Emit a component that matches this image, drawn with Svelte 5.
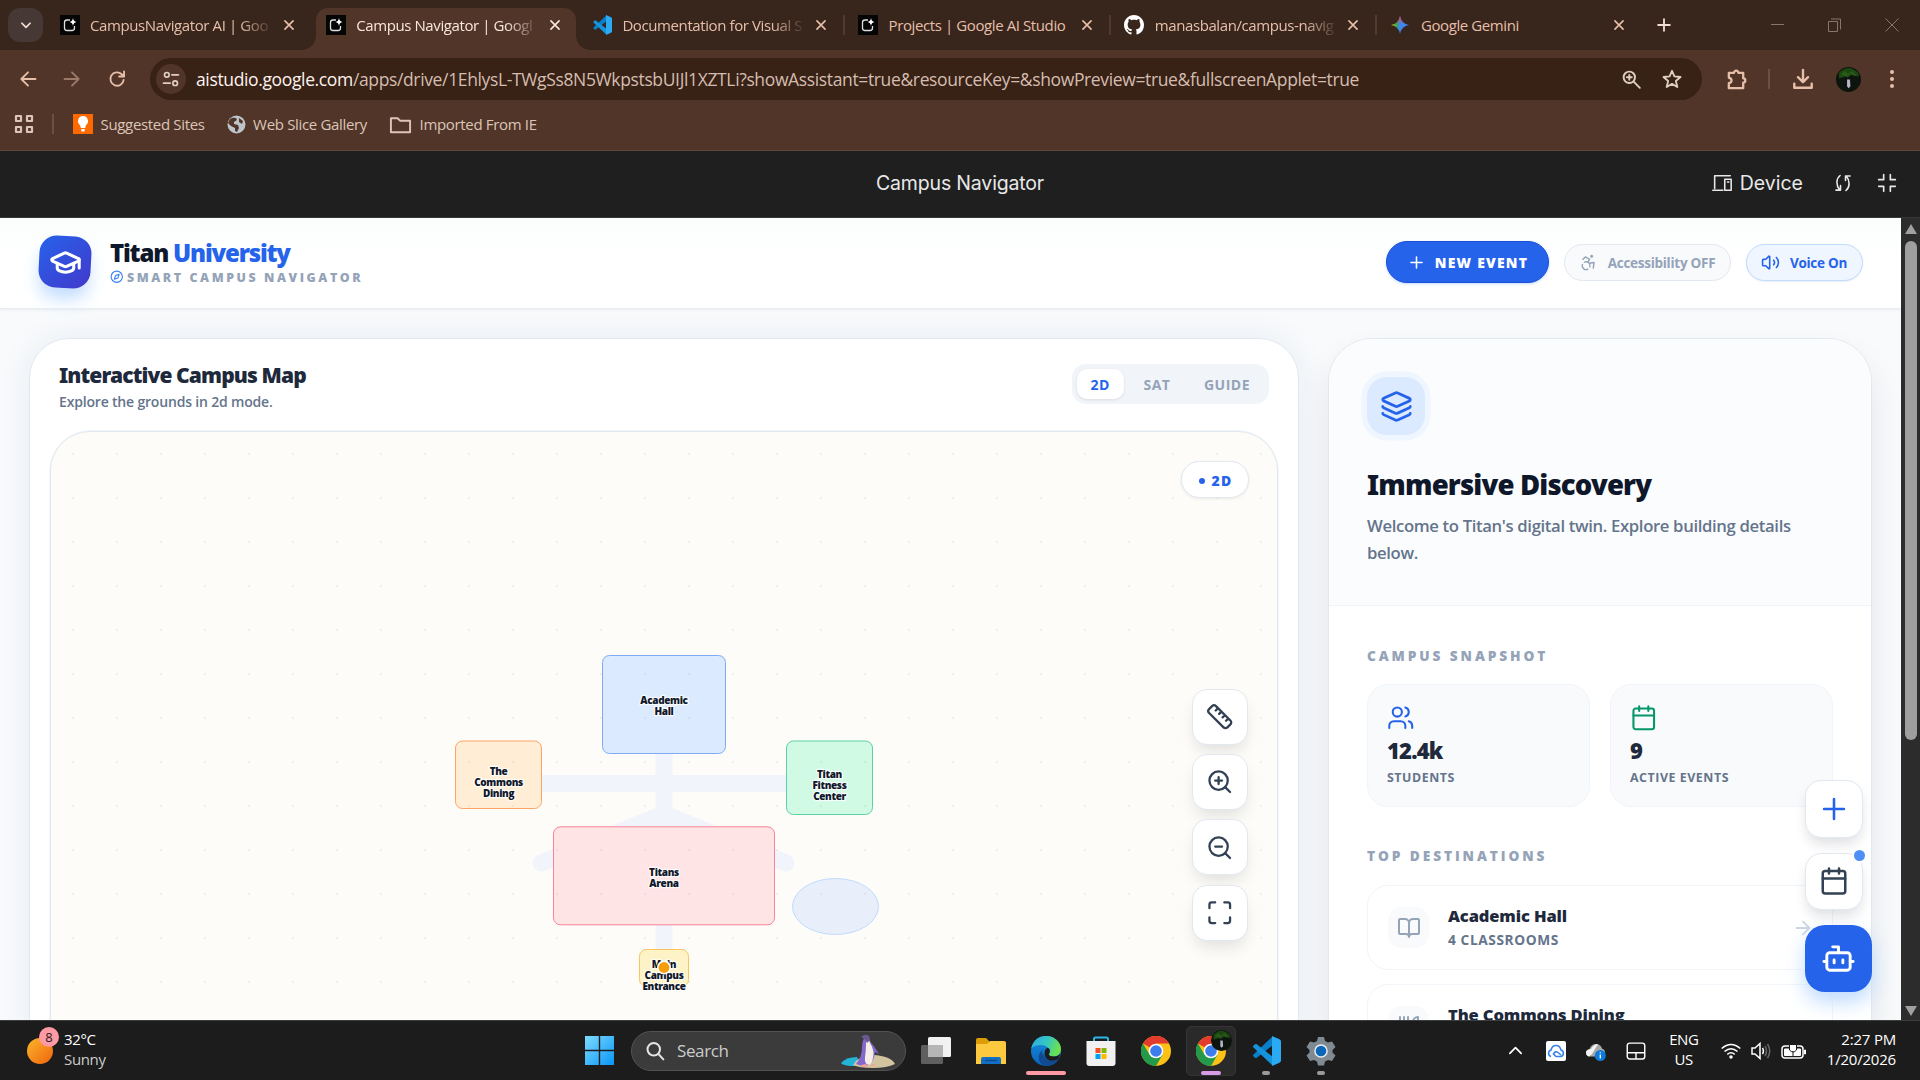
<script>
  const icons = {
    cap: '<path d="M21.42 10.922a1 1 0 0 0-.019-1.838L12.83 5.18a2 2 0 0 0-1.66 0L2.6 9.08a1 1 0 0 0 0 1.832l8.57 3.908a2 2 0 0 0 1.66 0z"/><path d="M22 10v6M6 12.5V16a6 3 0 0 0 12 0v-3.5"/>',
    compass: '<circle cx="12" cy="12" r="10"/><path d="m16.24 7.76-2.12 6.36-6.36 2.12 2.12-6.36z"/>',
    plus: '<path d="M5 12h14M12 5v14"/>',
    access: '<circle cx="16" cy="4" r="1"/><path d="m18 19 1-7-6 1M5 8l3-3 5.5 3-2.36 3.5M4.24 14.5a5 5 0 0 0 6.88 6M13.76 17.5a5 5 0 0 0-6.88-6"/>',
    volume: '<path d="M11 4.702a.705.705 0 0 0-1.203-.498L6.413 7.587A1.4 1.4 0 0 1 5.416 8H3a1 1 0 0 0-1 1v6a1 1 0 0 0 1 1h2.416a1.4 1.4 0 0 1 .997.413l3.383 3.384A.705.705 0 0 0 11 19.298zM16 9a5 5 0 0 1 0 6M19.364 18.364a9 9 0 0 0 0-12.728"/>',
    layers: '<path d="M12.83 2.18a2 2 0 0 0-1.66 0L2.6 6.08a1 1 0 0 0 0 1.83l8.58 3.91a2 2 0 0 0 1.66 0l8.58-3.9a1 1 0 0 0 0-1.83z"/><path d="M2 12a1 1 0 0 0 .58.91l8.6 3.91a2 2 0 0 0 1.65 0l8.58-3.9A1 1 0 0 0 22 12M2 17a1 1 0 0 0 .58.91l8.6 3.91a2 2 0 0 0 1.65 0l8.58-3.9A1 1 0 0 0 22 17"/>',
    users: '<path d="M16 21v-2a4 4 0 0 0-4-4H6a4 4 0 0 0-4 4v2M16 3.128a4 4 0 0 1 0 7.744M22 21v-2a4 4 0 0 0-3-3.87"/><circle cx="9" cy="7" r="4"/>',
    calendar: '<path d="M8 2v4M16 2v4M3 10h18"/><rect x="3" y="4" width="18" height="18" rx="2"/>',
    ruler: '<path d="M21.3 15.3a2.4 2.4 0 0 1 0 3.4l-2.6 2.6a2.4 2.4 0 0 1-3.4 0L2.7 8.7a2.41 2.41 0 0 1 0-3.4l2.6-2.6a2.41 2.41 0 0 1 3.4 0ZM14.5 12.5l2-2M11.5 9.5l2-2M8.5 6.5l2-2M17.5 15.5l2-2"/>',
    zoomIn: '<circle cx="11" cy="11" r="8"/><path d="m21 21-4.35-4.35M11 8v6M8 11h6"/>',
    zoomOut: '<circle cx="11" cy="11" r="8"/><path d="m21 21-4.35-4.35M8 11h6"/>',
    maximize: '<path d="M8 3H5a2 2 0 0 0-2 2v3M21 8V5a2 2 0 0 0-2-2h-3M3 16v3a2 2 0 0 0 2 2h3M16 21h3a2 2 0 0 0 2-2v-3"/>',
    book: '<path d="M12 7v14M3 18a1 1 0 0 1-1-1V4a1 1 0 0 1 1-1h5a4 4 0 0 1 4 4 4 4 0 0 1 4-4h5a1 1 0 0 1 1 1v13a1 1 0 0 1-1 1h-6a3 3 0 0 0-3 3 3 3 0 0 0-3-3z"/>',
    utensils: '<path d="M3 2v7c0 1.1.9 2 2 2h4a2 2 0 0 0 2-2V2M7 2v20M21 15V2a5 5 0 0 0-5 5v6c0 1.1.9 2 2 2h3Zm0 0v7"/>',
    arrow: '<path d="M5 12h14M12 5l7 7-7 7"/>',
    bot: '<path d="M12 8V4H8M2 14h2M20 14h2M15 13v2M9 13v2"/><rect x="4" y="8" width="16" height="12" rx="2"/>',
    close: '<path d="M5 5l14 14M19 5 5 19"/>',
    chevron: '<path d="m5 9 7 7 7-7"/>',
    chevronUp: '<path d="m4 16 8-8 8 8"/>',
    back: '<path d="M21 12H4M12 4l-8 8 8 8"/>',
    forward: '<path d="M3 12h17M12 4l8 8-8 8"/>',
    reload: '<path d="M20 13a8 8 0 1 1-2.4-6.7L20 8.700M20.500 3v6h-6"/>',
    tune: '<circle cx="7" cy="7" r="2.800"/><path d="M13 7h8M3 17h8"/><circle cx="17" cy="17" r="2.800"/>',
    magnify: '<circle cx="9.500" cy="9.500" r="6.500"/><path d="m14.500 14.500 7 7M9.500 6.700v5.600M6.700 9.500h5.600"/>',
    star: '<path d="m12 3 2.600 6.200 6.700.6-5.100 4.400 1.600 6.600L12 17.300l-5.800 3.500 1.600-6.600-5.100-4.400 6.700-.6z"/>',
    puzzle: '<path d="M4 5h5.500a2.200 2.200 0 1 1 4.400 0H19v5.800a2.200 2.200 0 1 1 0 4.400V21H4v-5.200a2.800 2.800 0 0 0 0-5.600z"/>',
    download: '<path d="M12 2v13M6.500 10l5.500 5.500 5.500-5.500M2.500 17v4.500h19V17"/>',
    folder: '<path d="M2 5.500h7l2.500 2.500H22v12H2z"/>',
    apps: '<path d="M4 4h5v5H4zM15 4h5v5h-5zM4 15h5v5H4zM15 15h5v5h-5z"/>',
    device: '<path d="M21 4H4v14M2 20h11M15 8h7v12h-7zM18 11h1.500"/>',
    sync: '<path d="M8.500 3C3.500 7 3.500 15 8 20M3.500 20.500H9V15M15.500 21c5-4 5-12 .5-17M20.500 3.500H15V9"/>',
    shrink: '<path d="M8 2v6H2M16 2v6h6M8 22v-6H2M16 22v-6h6"/>',
    search: '<circle cx="10.500" cy="10" r="7.500"/><path d="m16 15.500 6 6.500"/>',
    touchpad: '<rect x="1.500" y="2.500" width="21" height="19" rx="3"/><path d="M2 14h20M12 14v7"/>'
  };

  const tabs = [
    { title: 'CampusNavigator AI | Goo', logo: 'studio', fade: true },
    { title: 'Campus Navigator | Googl', logo: 'studio', active: true, fade: true },
    { title: 'Documentation for Visual S', logo: 'code', fade: true },
    { title: 'Projects | Google AI Studio', logo: 'studio', sep: true },
    { title: 'manasbalan/campus-navig', logo: 'github', sep: true, fade: true },
    { title: 'Google Gemini', logo: 'gemini', sep: true }
  ];

  const modes = ['2D', 'SAT', 'GUIDE'];
  let mode = '2D';

  const buildings = [
    { x: 602.5, y: 655.5, w: 123, h: 98, fill: '#dbeafe', stroke: '#7fabf5', label: ['Academic', 'Hall'], ty: 704.3 },
    { x: 455.5, y: 741, w: 86, h: 67.5, fill: '#ffedd5', stroke: '#fba566', label: ['The', 'Commons', 'Dining'], ty: 775.3 },
    { x: 786.5, y: 741, w: 86, h: 73.5, fill: '#d1fae5', stroke: '#5fcfa4', label: ['Titan', 'Fitness', 'Center'], ty: 778.3 },
    { x: 553.5, y: 826.8, w: 221, h: 98, fill: '#ffe4e6', stroke: '#f98398', label: ['Titans', 'Arena'], ty: 876.3 },
    { x: 639.5, y: 949.5, w: 49, h: 37, fill: '#fef3c7', stroke: '#f7c55c', label: ['Main', 'Campus', 'Entrance'], ty: 968.3 }
  ];

  const stats = [
    { icon: 'users', value: '12.4k', name: 'STUDENTS', tone: 'blue' },
    { icon: 'calendar', value: '9', name: 'ACTIVE EVENTS', tone: 'green' }
  ];

  const places = [
    { icon: 'book', name: 'Academic Hall', info: '4 CLASSROOMS' },
    { icon: 'utensils', name: 'The Commons Dining', info: '' }
  ];
</script>

{#snippet icon(name, size, weight = 2)}
  <svg class="ico" width={size} height={size} viewBox="0 0 24 24" fill="none" stroke="currentColor" stroke-width={weight} stroke-linecap="round" stroke-linejoin="round">{@html icons[name]}</svg>
{/snippet}

{#snippet vscode(size)}
  <svg class="ico" width={size} height={size} viewBox="0 0 30 30">
    <path d="M21 1 2.500 18.500q-1 1 0 2l1.500 1.300q.8.600 1.800 0L22 9z" fill="#0a7fc9" />
    <path d="M21 29 2.500 11.500q-1-1 0-2L4 8.200q.8-.6 1.800 0L22 21z" fill="#1593dd" />
    <path d="m21 0 7.500 3.300Q30 4 30 5.500v19q0 1.500-1.500 2.200L21 30z" fill="#29aaf3" />
  </svg>
{/snippet}

{#snippet chrome(size)}
  <svg class="ico" width={size} height={size} viewBox="0 0 30 30">
    <circle cx="15" cy="15" r="15" fill="#fbc116" />
    <path d="M15 15 2 7.500A15 15 0 0 1 28 7.500H15z" fill="#e33b2e" />
    <path d="M2 7.500 8.500 18.800 21.500 18.800 15 30A15 15 0 0 1 2 7.500z" fill="#229a4a" />
    <circle cx="15" cy="15" r="7.300" fill="#fff" />
    <circle cx="15" cy="15" r="5.800" fill="#3b7ded" />
  </svg>
{/snippet}

{#snippet avatar(size)}
  <svg class="ico" width={size} height={size} viewBox="0 0 26 26">
    <circle cx="13" cy="13" r="13" fill="#0d140d" />
    <path d="M3 6Q13-4 23 6l1 4-6-1-3-3-5 4-7 2z" fill="#1b4712" />
    <path d="m5 8 4-4 3 3 5-3 4 5-5-1-4 3-3-2z" fill="#2f651c" opacity=".7" />
    <path d="M11.500 13h3l.5 7-2 2-1.500-2z" fill="#b9b3d0" />
  </svg>
{/snippet}

{#snippet logo(name)}
  {#if name === 'studio'}
    <svg class="ico" width="20" height="20" viewBox="0 0 20 20">
      <rect width="20" height="20" fill="#050505" />
      <path d="M10 5H7Q4.500 5 4.500 7.500v5.500Q4.500 15.500 7 15.500h5q2.500 0 2.500-2.500v-2" fill="none" stroke="#ddd" stroke-width="1.300" />
      <path d="M13 3q.4 3.300 3.500 4-3.100.6-3.500 4-.4-3.400-3.500-4 3.100-.7 3.500-4z" fill="#fff" />
    </svg>
  {:else if name === 'code'}
    {@render vscode(20)}
  {:else if name === 'github'}
    <svg class="ico" width="20" height="20" viewBox="0 0 16 16">
      <path fill="#fff" d="M8 0C3.580 0 0 3.580 0 8c0 3.540 2.290 6.530 5.470 7.590.4.070.55-.17.55-.38 0-.19-.01-.82-.01-1.490-2.010.37-2.530-.49-2.690-.94-.09-.23-.48-.94-.82-1.130-.28-.15-.68-.52-.01-.53.63-.01 1.080.58 1.230.82.72 1.210 1.870.87 2.330.66.07-.52.28-.87.51-1.070-1.780-.2-3.640-.89-3.640-3.950 0-.87.31-1.590.82-2.150-.08-.2-.36-1.020.08-2.120 0 0 .67-.21 2.200.82.64-.18 1.320-.27 2-.27s1.360.09 2 .27c1.530-1.040 2.200-.82 2.200-.82.44 1.100.16 1.920.08 2.120.51.56.82 1.270.82 2.150 0 3.070-1.870 3.750-3.650 3.950.29.25.54.73.54 1.480 0 1.070-.01 1.930-.01 2.200 0 .21.15.46.55.38A8 8 0 0 0 16 8c0-4.420-3.580-8-8-8z" />
    </svg>
  {:else}
    <svg class="ico" width="20" height="20" viewBox="0 0 20 20">
      <defs>
        <linearGradient id="gem" x1="0" y1=".5" x2="1" y2=".5">
          <stop offset="0" stop-color="#fbbc04" /><stop offset=".3" stop-color="#34a853" />
          <stop offset=".5" stop-color="#4285f4" /><stop offset="1" stop-color="#3f86f7" />
        </linearGradient>
        <linearGradient id="gem2" x1="0" y1="0" x2="0" y2="1">
          <stop offset="0" stop-color="#ea4335" /><stop offset=".45" stop-color="#ea4335" stop-opacity="0" />
        </linearGradient>
      </defs>
      <path d="M10 1q1.200 7.600 9 9-7.800 1.400-9 9-1.200-7.600-9-9 7.800-1.400 9-9z" fill="url(#gem)" />
      <path d="M10 1q1.200 7.600 9 9-7.800 1.400-9 9-1.200-7.600-9-9 7.800-1.400 9-9z" fill="url(#gem2)" />
    </svg>
  {/if}
{/snippet}

<div class="screen">
  <div class="tabstrip">
    <button class="tab-search" aria-label="Search tabs">{@render icon('chevron', 14, 3)}</button>
    {#each tabs as tab}
      <div class="tab" class:active={tab.active} class:sep={tab.sep}>
        {@render logo(tab.logo)}
        <span class="tab-title" class:fade={tab.fade}>{tab.title}</span>
        {@render icon('close', 14, 2.8)}
      </div>
    {/each}
    <div class="new-tab">{@render icon('plus', 20, 2.2)}</div>
    <div class="win-buttons">
      <svg width="14" height="14"><path d="M0 6.500h13" /></svg>
      <svg width="14" height="14"><path d="M.5 3.500h9v10h-9zM3 1h9.500v10.500" /></svg>
      <svg width="14" height="14"><path d="m.5.5 13 13m0-13-13 13" /></svg>
    </div>
  </div>

  <div class="toolbar">
    <div class="nav">
      {@render icon('back', 20, 2.2)}
      <span class="dim">{@render icon('forward', 20, 2.2)}</span>
      {@render icon('reload', 20, 2.2)}
    </div>
    <div class="omnibox">
      <span class="site">{@render icon('tune', 20, 2)}</span>
      <span class="url"><b>aistudio.google.com</b>/apps/drive/1EhlysL-TWgSs8N5WkpstsbUIJl1XZTLi?showAssistant=true&amp;resourceKey=&amp;showPreview=true&amp;fullscreenApplet=true</span>
      {@render icon('magnify', 21, 2.2)}
      {@render icon('star', 22, 2)}
    </div>
    <div class="actions">
      {@render icon('puzzle', 23, 2.4)}
      <i></i>
      {@render icon('download', 22, 2.6)}
      {@render avatar(25)}
      <svg class="ico menu" width="6" height="20"><circle cx="3" cy="3" r="2" /><circle cx="3" cy="10" r="2" /><circle cx="3" cy="17" r="2" /></svg>
    </div>
  </div>

  <div class="bookmarks">
    {@render icon('apps', 24, 2.2)}
    <i></i>
    <div class="mark">
      <svg class="ico" width="20" height="20" viewBox="0 0 20 20"><rect width="20" height="20" fill="#ff6a00" /><path d="M10 2a5 5 0 0 1 3 9l-.8 3H7.800L7 11a5 5 0 0 1 3-9zM8.300 15h3.400v2.500H8.300z" fill="#fff" /></svg>
      <span>Suggested Sites</span>
    </div>
    <div class="mark">
      <svg class="ico" width="19" height="19" viewBox="0 0 19 19"><circle cx="9.500" cy="9.500" r="9" fill="#bcc3c9" /><path d="M3 4q3-2 6-1l1 2-3 2v2l4 1 1 3-2 4-2-1v-3l-4-2-3-3zM12 3l4 3-1 3-3-2z" fill="#503528" /></svg>
      <span>Web Slice Gallery</span>
    </div>
    <div class="mark">
      {@render icon('folder', 23, 2)}
      <span>Imported From IE</span>
    </div>
  </div>

  <div class="appbar">
    <span></span>
    <span class="app-title">Campus Navigator</span>
    <div class="app-tools">
      {@render icon('device', 22, 1.7)}
      <span>Device</span>
      {@render icon('sync', 20, 1.9)}
      {@render icon('shrink', 20, 2)}
    </div>
  </div>

  <div class="viewport">
    <div class="page">
      <header>
        <div class="brand-icon"><div>{@render icon('cap', 33, 2.2)}</div></div>
        <div class="brand">
          <h1>Titan <span>University</span></h1>
          <p>{@render icon('compass', 13.5, 2)}<span>SMART CAMPUS NAVIGATOR</span></p>
        </div>
        <div class="header-buttons">
          <button class="event">{@render icon('plus', 19, 2)}<span>NEW EVENT</span></button>
          <button class="pill">{@render icon('access', 19, 1.8)}<span>Accessibility OFF</span></button>
          <button class="pill on">{@render icon('volume', 19, 2)}<span>Voice On</span></button>
        </div>
      </header>

      <main>
        <section class="map-card">
          <div class="map-head">
            <div>
              <h2>Interactive Campus Map</h2>
              <p>Explore the grounds in 2d mode.</p>
            </div>
            <div class="modes">
              {#each modes as m}
                <button class:current={m === mode} on:click={() => (mode = m)}>{m}</button>
              {/each}
            </div>
          </div>
          <div class="map-outer">
            <div class="map">
              <svg class="campus" width="1225" height="640" viewBox="51 432 1225 640">
                <defs>
                  <pattern id="dots" x="51" y="432" width="44" height="44" patternUnits="userSpaceOnUse">
                    <rect x="21" y="21" width="2" height="2" fill="#0f172a" opacity=".055" />
                  </pattern>
                </defs>
                <path class="path" d="M664 754v200M498 783.500h331M541 863l123-49 122 49" />
                <ellipse cx="835.500" cy="906.500" rx="43" ry="28" fill="#e8effb" stroke="#bfdbfe" />
                {#each buildings as b}
                  <rect x={b.x} y={b.y} width={b.w} height={b.h} rx="7" fill={b.fill} stroke={b.stroke} />
                {/each}
                <rect x="51" y="432" width="1225" height="640" fill="url(#dots)" />
                {#each buildings as b}
                  {#each b.label as line, i}
                    <text x={b.x + b.w / 2} y={b.ty + i * 10.7}>{line}</text>
                  {/each}
                {/each}
                <circle cx="664" cy="967.500" r="6.200" fill="#f59e0b" stroke="#fff" stroke-width="1.500" />
              </svg>
              <div class="map-badge"><i></i>2D</div>
              <div class="map-tools">
                <button aria-label="Measure">{@render icon('ruler', 27.5, 2)}</button>
                <button aria-label="Zoom in">{@render icon('zoomIn', 27.5, 2)}</button>
                <button aria-label="Zoom out">{@render icon('zoomOut', 27.5, 2)}</button>
                <button aria-label="Fit">{@render icon('maximize', 27.5, 2)}</button>
              </div>
            </div>
          </div>
        </section>

        <aside>
          <div class="intro">
            <div class="intro-icon">{@render icon('layers', 33, 2)}</div>
            <h2>Immersive Discovery</h2>
            <p>Welcome to Titan's digital twin. Explore building details below.</p>
          </div>
          <div class="details">
            <h3>CAMPUS SNAPSHOT</h3>
            <div class="stats">
              {#each stats as s}
                <div class="stat">
                  <span class={s.tone}>{@render icon(s.icon, 27.5, 1.8)}</span>
                  <strong>{s.value}</strong>
                  <small>{s.name}</small>
                </div>
              {/each}
            </div>
            <h3 class="dest">TOP DESTINATIONS</h3>
            {#each places as p}
              <div class="place">
                <div class="place-icon">{@render icon(p.icon, 24, 2)}</div>
                <div class="place-text">
                  <strong>{p.name}</strong>
                  <small>{p.info}</small>
                </div>
                {@render icon('arrow', 22, 2)}
              </div>
            {/each}
          </div>
        </aside>
      </main>

      <div class="fabs">
        <button class="fab blue" aria-label="Add">{@render icon('plus', 34, 1.8)}</button>
        <button class="fab" aria-label="Events">{@render icon('calendar', 30, 2)}<i></i></button>
        <button class="fab bot" aria-label="Assistant">{@render icon('bot', 35, 2)}</button>
      </div>
    </div>
    <div class="scrollbar">
      <svg width="12" height="10"><path d="M6 0 12 10H0z" /></svg>
      <div class="thumb"></div>
      <svg width="12" height="10"><path d="M0 0h12L6 10z" /></svg>
    </div>
  </div>

  <footer>
    <div class="weather">
      <div class="sun"><b>8</b></div>
      <div class="lines"><span>32°C</span><span class="grey">Sunny</span></div>
    </div>
    <div class="dock">
      <svg class="ico" width="29" height="29" viewBox="0 0 29 29">
        <defs><linearGradient id="win" x1="0" y1="0" x2="1" y2="1" gradientUnits="objectBoundingBox"><stop offset="0" stop-color="#7ddcff" /><stop offset="1" stop-color="#0a95f5" /></linearGradient></defs>
        <path d="M0 0h13.800v13.800H0zM15.200 0H29v13.800H15.200zM0 15.200h13.800V29H0zM15.200 15.200H29V29H15.200z" fill="url(#win)" />
      </svg>
      <div class="search">
        {@render icon('search', 20, 2.4)}
        <span>Search</span>
        <svg class="ico" width="54" height="34" viewBox="0 0 54 34">
          <path d="M0 29q5-6 16-6l4 9H9q-8-1-9-3z" fill="#22b5d8" />
          <path d="M12 31q6-10 20-10 18 1 22 9-8 4-22 4-14 0-20-3z" fill="#d3c4a0" />
          <path d="M15 30q6-7 6-16 0-8 3-11l4 3q6 7 10 14l-4-2q-1 10-6 13l-7 1z" fill="#8467cc" />
          <path d="M25 10q0-4 3-4l1 3q5 8 3 15-1 6-4 7-5-1-4-8 1-6 1-13z" fill="#f4eee6" />
          <path d="m20 3 3-2q3-1 5 1 1 2 1 4l-3 3q-1-4-6-6z" fill="#6a5890" />
          <path d="m20 31 5-1 1 3h-5zM28 31l5-1v2z" fill="#f2a38f" />
        </svg>
      </div>
      <div class="app">
        <svg width="30" height="30" viewBox="0 0 30 30"><rect y="9" width="22" height="19" rx="1.500" fill="#5f5f5f" /><rect x="7" y="1" width="23" height="20" rx="1.500" fill="#f1f1f1" /><path d="M7 9h15v12H8.500Q7 21 7 19.500z" fill="#b5b5b5" /></svg>
      </div>
      <div class="app">
        <svg width="30" height="30" viewBox="0 0 30 30"><path d="M0 4q0-2 2-2h8l3 3v5H0z" fill="#dc9c05" /><path d="M0 8h11l3-3h14q2 0 2 2v21H0z" fill="#fdca3f" /><path d="M5 28v-5q0-2 2-2h16q2 0 2 2v5z" fill="#1270c4" /><path d="M9 24.500h12" stroke="#0b4a8c" stroke-width="1.500" /></svg>
      </div>
      <div class="app">
        <svg width="30" height="30" viewBox="0 0 30 30">
          <defs>
            <linearGradient id="e1" x1="0" y1="0" x2="1" y2=".3"><stop offset="0" stop-color="#2ba8e6" /><stop offset=".55" stop-color="#35c6c4" /><stop offset="1" stop-color="#6be04e" /></linearGradient>
            <linearGradient id="e2" x1="0" y1="0" x2="0" y2="1"><stop offset="0" stop-color="#1490df" /><stop offset="1" stop-color="#0c62ba" /></linearGradient>
          </defs>
          <circle cx="15" cy="15" r="15" fill="url(#e2)" />
          <path d="M.3 12.500C2 4 8 0 15 0c9 0 15 6.500 15 13 0 5-3.500 7.500-7.500 7.500-4 0-5-1.500-4.500-2.500 1.500-2 1.500-3.500 0-5.500C14 7.500 4 8 .3 12.500z" fill="url(#e1)" />
          <path d="M12 14c-4 7 2 14.500 15 10-2.500 4-7 6-12 6-9-2-9-13-3-16z" fill="#114a8f" />
          <path d="M18.500 13q1 3-.7 5 .2 2.500 5.200 2.500 3.500 0 6-2.500-.5 4-2 5.500-5 3-9.500 1-5.500-4-3.500-10 2-4 4.500-1.500z" fill="#1c1c1c" />
          <path d="M12 17c1 6 7 9.500 15 6.500-2.500 4.500-7 6.500-12 6.500-5-1-7-8-3-13z" fill="#114a8f" />
        </svg>
        <i class="run wide"></i>
      </div>
      <div class="app">
        <svg width="30" height="30" viewBox="0 0 30 30"><path d="M8 6V3q0-1.500 1.500-1.500h11Q22 1.500 22 3v3" fill="none" stroke="#2bb6e8" stroke-width="2" /><path d="M.5 5h29v22q0 3-3 3h-23q-3 0-3-3z" fill="#f1f1f1" /><path d="M9.500 12h5v5h-5z" fill="#f25022" /><path d="M15.500 12h5v5h-5z" fill="#7fba00" /><path d="M9.500 18h5v5h-5z" fill="#00a4ef" /><path d="M15.500 18h5v5h-5z" fill="#ffb900" /></svg>
      </div>
      <div class="app">{@render chrome(30)}</div>
      <div class="app open">
        {@render chrome(30)}
        <span class="who">{@render avatar(21)}</span>
        <i class="run violet"></i>
      </div>
      <div class="app">{@render vscode(30)}<i class="run"></i></div>
      <div class="app">
        <svg width="30" height="30" viewBox="0 0 30 30"><path d="M12 1h6l1 4 3 1.500 4-1 3.500 5.500-3 3v2.500l3 3-3.500 5.500-4-1-3 1.500-1 4h-6l-1-4-3-1.500-4 1L.5 19.500l3-3V14l-3-3L4 5.500l4 1L11 5z" fill="#808a93" /><circle cx="15" cy="15" r="6.800" fill="#e9edf0" /><circle cx="15" cy="15" r="5.300" fill="#0a66b8" /></svg>
        <i class="run"></i>
      </div>
    </div>
    <div class="tray">
      {@render icon('chevronUp', 17, 2.4)}
      <svg width="20" height="20" viewBox="0 0 20 20"><rect width="20" height="20" rx="2" fill="#fff" /><path d="M5 15.500a3.400 3.400 0 0 1 0-6.500q1-4.500 5-4.500t5 4.500a3.400 3.400 0 0 1 0 6.500h-5l-2.500-2.500q2-3.500 4.500-1.500l3 2.500" fill="none" stroke="#3b82e8" stroke-width="1.600" /></svg>
      <svg width="20" height="20" viewBox="0 0 20 20"><path d="M3 15.500q-3-1-3-4 0-3 3.500-3.500Q5.500 3 10 3q4.500 0 6 4.500 3 1 3 4t-3 4z" fill="#a9a9a9" /><path d="M5 8q3-5 7-5L6 13l-3 2.500q-3-1-3-4Q0 8.500 5 8z" fill="#f3f3f3" /><circle cx="14.300" cy="14.500" r="5.500" fill="#0d7bdc" /><path d="M14.300 13.500v4M14.300 11.300v1" stroke="#fff" stroke-width="1.300" /></svg>
      {@render icon('touchpad', 20, 1.7)}
      <div class="lang"><span>ENG</span><span>US</span></div>
      <svg width="20" height="16" viewBox="0 0 20 16" fill="none" stroke="#fff" stroke-width="1.500"><path d="M.7 5.500q9.300-8 18.600 0M3.500 8.500q6.500-5.500 13 0M6.300 11.300q3.700-3 7.400 0" /><circle cx="10" cy="14" r="1" fill="#fff" /></svg>
      <svg class="snd" width="20" height="18" viewBox="0 0 20 18" fill="none" stroke="#fff" stroke-width="1.500"><path d="M1 6h3l5-4.500v15L4 12H1zM11.500 6q1.800 3 0 6" /><path d="M14 4q3 5 0 10M16.500 2q4.500 7 0 14" stroke="#666" /></svg>
      <svg width="26" height="18" viewBox="0 0 26 18"><rect x="1" y="4" width="21" height="12" rx="3" fill="none" stroke="#fff" stroke-width="1.500" /><path d="M3.500 7h16v6.500h-16zM23.500 8h1v4h-1z" fill="#fff" stroke="#fff" /><path d="M8.500 2.500h7v5.500q-3.500 4-7 0zM10 0v3M14 0v3M12 9v6" fill="#fff" stroke="#1c1c1c" stroke-width="1" /></svg>
      <div class="clock"><span>2:27 PM</span><span>1/20/2026</span></div>
    </div>
  </footer>
</div>

<style>
  :global(body) {
    margin: 0;
    overflow: hidden;
  }
  .screen {
    width: 1920px;
    height: 1080px;
    display: flex;
    flex-direction: column;
    overflow: hidden;
    font-family: 'Segoe UI', 'Open Sans', 'Noto Sans', sans-serif;
    background: #503528;
  }
  .screen :global(*) {
    box-sizing: border-box;
  }
  .ico {
    flex: none;
    display: block;
  }
  button {
    font-family: inherit;
    border: none;
    padding: 0;
    display: flex;
    align-items: center;
    justify-content: center;
  }
  h1, h2, h3, p {
    margin: 0;
  }
  h1, h2, .stat strong {
    font-family: 'Segoe UI', 'Noto Sans', 'Open Sans', sans-serif;
    font-weight: 900;
  }
  span {
    white-space: nowrap;
  }

  /* browser */
  .tabstrip {
    height: 50px;
    flex: none;
    display: flex;
    background: #38261d;
    color: #e7bfa9;
    padding-left: 8px;
  }
  .tab-search {
    width: 35px;
    height: 34px;
    margin: 8px 6.500px 0 0;
    border-radius: 12px;
    background: #463834;
    color: #f4ded3;
  }
  .tab {
    position: relative;
    width: 266.200px;
    height: 50px;
    display: flex;
    align-items: center;
    padding-left: 10px;
  }
  .tab.active {
    width: 260px;
    margin-right: 6.200px;
    margin-top: 8px;
    height: 42px;
    padding-bottom: 8px;
    background: #503528;
    border-radius: 12px 12px 0 0;
    color: #f9e6dc;
  }
  .tab.active::before,
  .tab.active::after {
    content: '';
    position: absolute;
    bottom: 0;
    width: 14px;
    height: 14px;
  }
  .tab.active::before {
    left: -14px;
    background: radial-gradient(circle at 0 0, #38261d 13.500px, #503528 14px);
  }
  .tab.active::after {
    right: -14px;
    background: radial-gradient(circle at 100% 0, #38261d 13.500px, #503528 14px);
  }
  .tab.sep::before {
    content: '';
    position: absolute;
    left: -5px;
    top: 15px;
    width: 2px;
    height: 20px;
    background: #503a30;
  }
  .tab-title {
    width: 182px;
    margin: 0 9.500px 0 10.500px;
    font-size: 15px;
    letter-spacing: -0.400px;
  }
  .tab-title.fade {
    mask-image: linear-gradient(to right, #000 150px, transparent 184px);
  }
  .new-tab {
    width: 54px;
    padding-left: 7px;
    display: flex;
    align-items: center;
    color: #f4ded3;
  }
  .win-buttons {
    display: flex;
    align-items: center;
    gap: 43px;
    margin-left: 70px;
    fill: none;
    stroke: #857770;
  }
  .toolbar {
    height: 58px;
    flex: none;
    display: flex;
    align-items: center;
    background: #503528;
    color: #e7bfa9;
  }
  .nav {
    width: 150px;
    padding-left: 17.500px;
    display: flex;
    gap: 24.500px;
  }
  .dim {
    opacity: 0.5;
  }
  .omnibox {
    width: 1552px;
    height: 42px;
    display: flex;
    align-items: center;
    gap: 19px;
    padding: 0 19px 0 6px;
    border-radius: 21px;
    background: #382115;
    color: #e0cdc3;
  }
  .site {
    width: 30px;
    height: 30px;
    margin-right: -9px;
    border-radius: 50%;
    background: #503528;
    display: flex;
    align-items: center;
    justify-content: center;
  }
  .url {
    flex: 1;
    font-size: 17.500px;
    letter-spacing: -0.360px;
    color: #d4bdb0;
  }
  .url b {
    font-weight: 400;
    color: #fdf3ee;
  }
  .actions {
    display: flex;
    align-items: center;
    margin-left: 23px;
  }
  .actions i {
    width: 2px;
    height: 20px;
    margin: 0 22px 0 20px;
    background: #6f4f40;
  }
  .actions :global(svg:nth-child(4)) {
    margin: 0 28px 0 22px;
  }
  .menu {
    fill: #e7bfa9;
  }
  .bookmarks {
    height: 43px;
    flex: none;
    display: flex;
    align-items: center;
    padding: 0 0 10px 12px;
    border-bottom: 1px solid #5d473c;
    color: #dcc5b8;
    font-size: 15px;
  }
  .bookmarks i {
    width: 2px;
    height: 20px;
    margin: 0 19px 0 16px;
    background: #6f4f40;
  }
  .mark {
    display: flex;
    align-items: center;
    gap: 7.500px;
    margin-right: 22px;
  }
  .mark span {
    letter-spacing: -0.330px;
  }
  .appbar {
    height: 67px;
    flex: none;
    display: grid;
    grid-template-columns: 1fr auto 1fr;
    align-items: center;
    padding-bottom: 2px;
    background: #1f1f1f;
    border-bottom: 1px solid #383838;
    color: #e8e8e8;
    font-family: Inter, sans-serif;
    font-size: 19.500px;
  }
  .app-title {
    letter-spacing: -0.170px;
  }
  .app-tools {
    display: flex;
    align-items: center;
    justify-content: flex-end;
    padding-right: 23px;
    gap: 24px;
  }
  .app-tools span {
    margin: 0 6px 0 -17px;
  }

  /* page */
  .viewport {
    height: 802px;
    flex: none;
    display: flex;
  }
  .page {
    position: relative;
    width: 1901px;
    height: 802px;
    overflow: hidden;
    background: #f8fafc;
  }
  header {
    position: relative;
    height: 91px;
    display: flex;
    align-items: center;
    padding: 0 38px 2px 39px;
    background: linear-gradient(#fbfdfd, #fff 40px);
    border-bottom: 1px solid #e9edf3;
    box-shadow: 0 1px 3px rgba(15, 23, 42, 0.06);
  }
  .brand-icon {
    width: 52px;
    height: 52px;
    border-radius: 17px;
    background: linear-gradient(135deg, #2563eb, #4338ca);
    box-shadow: 0 12px 18px -2px #bfdbfe;
    transform: rotate(3deg);
    color: #fff;
    display: flex;
    align-items: center;
    justify-content: center;
  }
  .brand-icon div {
    transform: rotate(-3deg);
  }
  .brand {
    margin-left: 19px;
    flex: 1;
  }
  h1 {
    font-size: 24px;
    line-height: 28px;
    letter-spacing: -1.200px;
    color: #0f172a;
  }
  h1 span {
    color: #2563eb;
  }
  .brand p {
    display: flex;
    align-items: center;
    gap: 3.500px;
    margin-top: 2px;
    font-size: 12.400px;
    line-height: 17px;
    font-weight: 800;
    letter-spacing: 2.570px;
    color: #94a3b8;
  }
  .brand p :global(svg) {
    color: #3b82f6;
  }
  .header-buttons {
    display: flex;
    align-items: center;
    gap: 15px;
  }
  .event {
    width: 163px;
    height: 42px;
    padding-top: 1px;
    gap: 9px;
    border: 1px solid #1d4ed8;
    border-radius: 21px;
    background: #2563eb;
    color: #fff;
    font-size: 14px;
    font-weight: 800;
    letter-spacing: 1.200px;
    box-shadow: 0 1px 3px #bfdbfe;
  }
  .pill {
    width: 167px;
    height: 37px;
    gap: 10px;
    padding: 1px 1px 0 0;
    border: 1px solid #e2e8f0;
    border-radius: 19px;
    background: #f8fafc;
    color: #94a3b8;
    font-size: 13.500px;
    font-weight: 700;
    letter-spacing: -0.270px;
  }
  .pill.on {
    width: 117px;
    border-color: #bfdbfe;
    background: #eff6ff;
    color: #2563eb;
    box-shadow: 0 1px 2px rgba(15, 23, 42, 0.08);
  }
  main {
    display: flex;
    gap: 29px;
    padding: 29px;
  }
  .map-card {
    width: 1270px;
    height: 760px;
    flex: none;
    border: 1px solid #e2e8f0;
    border-radius: 40px 40px 0 0;
    background: #fff;
    box-shadow: 0 0 34px rgba(30, 58, 110, 0.07);
  }
  .map-head {
    height: 91px;
    display: flex;
    justify-content: space-between;
    padding: 23px 29px 0;
  }
  .map-head h2 {
    font-size: 21px;
    line-height: 26px;
    letter-spacing: -0.870px;
    color: #1e293b;
  }
  .map-head p {
    margin-top: 4px;
    font-size: 14px;
    line-height: 20px;
    font-weight: 600;
    letter-spacing: -0.180px;
    color: #64748b;
  }
  .modes {
    display: flex;
    gap: 5.500px;
    height: 40px;
    margin-top: 2px;
    padding: 5px;
    border-radius: 14px;
    background: #f1f5f9;
  }
  .modes button {
    height: 30px;
    padding: 0 14px;
    border-radius: 10px;
    background: none;
    font-size: 14px;
    font-weight: 700;
    letter-spacing: 0.500px;
    color: #94a3b8;
  }
  .modes .current {
    background: #fff;
    color: #2563eb;
    box-shadow: 0 1px 3px rgba(15, 23, 42, 0.1);
  }
  .map-outer {
    margin: 0 19px;
    border: 1px solid #f1f5f9;
    border-radius: 42px 42px 0 0;
  }
  .map {
    position: relative;
    height: 660px;
    overflow: hidden;
    border: 1px solid #e2e8f0;
    border-radius: 40px 40px 0 0;
    background: #fdfcf8;
  }
  .campus {
    display: block;
  }
  .path {
    fill: none;
    stroke: #f1f4fa;
    stroke-width: 17px;
    stroke-linecap: round;
    stroke-linejoin: miter;
  }
  .campus text {
    font-size: 10px;
    font-weight: 800;
    letter-spacing: -0.350px;
    fill: #0f172a;
    stroke: #fff;
    stroke-opacity: 0.8;
    stroke-width: 2.500px;
    paint-order: stroke;
    stroke-linejoin: round;
    text-anchor: middle;
  }
  .map-badge {
    position: absolute;
    top: 29px;
    right: 28px;
    width: 68px;
    height: 37px;
    padding: 1px 0 0 1px;
    display: flex;
    align-items: center;
    justify-content: center;
    gap: 7px;
    border: 1px solid #e2e8f0;
    border-radius: 19px;
    background: #fff;
    color: #2563eb;
    font-size: 14px;
    font-weight: 800;
    letter-spacing: 1.200px;
    box-shadow: 0 1px 3px rgba(15, 23, 42, 0.08);
  }
  .map-badge i {
    width: 6px;
    height: 6px;
    margin-top: 2px;
    border-radius: 50%;
    background: #2563eb;
  }
  .map-tools {
    position: absolute;
    top: 257px;
    right: 29px;
    display: flex;
    flex-direction: column;
    gap: 9.200px;
  }
  .map-tools button {
    width: 56px;
    height: 56px;
    border: 1px solid #e2e8f0;
    border-radius: 15px;
    background: #fff;
    color: #334155;
    box-shadow: 0 9px 16px -4px rgba(15, 23, 42, 0.13);
  }
  aside {
    width: 544px;
    height: 760px;
    flex: none;
    overflow: hidden;
    border: 1px solid #e2e8f0;
    border-radius: 44px 44px 0 0;
    background: #fff;
    box-shadow: 0 18px 34px rgba(15, 23, 42, 0.09);
  }
  .intro {
    height: 267px;
    padding: 38px;
    border-bottom: 1px solid #f1f5f9;
    background: #fbfcfe;
  }
  .intro-icon {
    width: 58px;
    height: 58px;
    display: flex;
    align-items: center;
    justify-content: center;
    border-radius: 20px;
    background: #dbeafe;
    color: #2563eb;
    box-shadow: 0 0 0 5.500px #eff6ff;
  }
  .intro h2 {
    margin-top: 32px;
    font-size: 27.500px;
    line-height: 36px;
    letter-spacing: -0.820px;
    color: #0f172a;
  }
  .intro p {
    width: 450px;
    margin-top: 9px;
    font-size: 16.700px;
    line-height: 27px;
    font-weight: 550;
    letter-spacing: -0.350px;
    color: #64748b;
  }
  .details {
    padding: 40px 38px;
  }
  h3 {
    font-size: 13.700px;
    line-height: 20px;
    font-weight: 800;
    letter-spacing: 2.900px;
    color: #94a3b8;
  }
  .stats {
    display: grid;
    grid-template-columns: 223px 223px;
    gap: 20px;
    margin-top: 18px;
  }
  .stat {
    height: 123px;
    padding: 19px;
    display: flex;
    flex-direction: column;
    border: 1px solid #f1f5f9;
    border-radius: 21px;
    background: #f8fafc;
  }
  .blue {
    color: #2563eb;
  }
  .green {
    color: #059669;
  }
  .stat strong {
    margin-top: 3px;
    font-size: 22px;
    line-height: 30px;
    letter-spacing: -0.800px;
    color: #1e293b;
  }
  .stat small {
    margin-top: 4px;
    font-size: 12.400px;
    line-height: 18px;
    font-weight: 700;
    letter-spacing: 0.550px;
    color: #64748b;
  }
  h3.dest {
    margin: 39px 0 19px;
  }
  .place {
    height: 85px;
    margin-bottom: 14px;
    padding: 0 18px 0 20px;
    display: flex;
    align-items: center;
    border: 1px solid #f1f5f9;
    border-radius: 21px;
    color: #cbd5e1;
  }
  .place-icon {
    width: 41px;
    height: 41px;
    display: flex;
    align-items: center;
    justify-content: center;
    border-radius: 14px;
    background: #f8fafc;
    color: #94a3b8;
  }
  .place-text {
    flex: 1;
    display: flex;
    flex-direction: column;
    margin-left: 19px;
  }
  .place-text strong {
    font-size: 16.500px;
    line-height: 24px;
    font-weight: 800;
    letter-spacing: -0.120px;
    color: #1e293b;
  }
  .place-text small {
    height: 24px;
    font-size: 13.700px;
    line-height: 24px;
    font-weight: 700;
    letter-spacing: 0.600px;
    color: #64748b;
  }
  .fabs {
    position: absolute;
    top: 562px;
    left: 1805px;
    display: flex;
    flex-direction: column;
    gap: 15px;
  }
  .fab {
    position: relative;
    width: 58px;
    height: 57.500px;
    border: 1px solid #e2e8f0;
    border-radius: 16px;
    background: #fff;
    color: #334155;
    box-shadow: 0 8px 14px -3px rgba(15, 23, 42, 0.15);
  }
  .fab.blue {
    color: #2563eb;
  }
  .fab i {
    position: absolute;
    top: -4px;
    right: -3px;
    width: 11px;
    height: 11px;
    border-radius: 50%;
    background: #4f8ff7;
    box-shadow: 0 0 0 2px #fff;
  }
  .fab.bot {
    width: 67px;
    height: 67px;
    border: none;
    border-radius: 20px;
    background: #2563eb;
    color: #fff;
    box-shadow: 0 10px 20px #bfdbfe;
  }
  .scrollbar {
    width: 19px;
    height: 802px;
    display: flex;
    flex-direction: column;
    align-items: center;
    padding: 6px 0 4px;
    background: #2c2c2c;
    fill: #a0a0a0;
  }
  .thumb {
    width: 12px;
    height: 499px;
    margin: 7px 0 auto;
    border-radius: 6px;
    background: #9f9f9f;
  }

  /* taskbar */
  footer {
    height: 60px;
    flex: none;
    display: flex;
    border-top: 1px solid #3b3f3e;
    background: #1c1c1c;
    color: #fff;
    font-size: 15px;
  }
  .weather {
    width: 585px;
    display: flex;
    align-items: center;
    padding-left: 27px;
  }
  .sun {
    position: relative;
    width: 26px;
    height: 26px;
    border-radius: 50%;
    background: linear-gradient(135deg, #f8b62d, #f2640c);
  }
  .sun b {
    position: absolute;
    top: -11px;
    left: 12px;
    width: 20px;
    height: 20px;
    border-radius: 50%;
    background: #ff99a4;
    color: #1c1c1c;
    font-size: 13px;
    font-weight: 400;
    line-height: 20px;
    text-align: center;
  }
  .lines {
    margin: -3px 0 0 11px;
    display: flex;
    flex-direction: column;
    line-height: 20px;
    letter-spacing: -0.350px;
  }
  .grey {
    color: #ccc;
  }
  .dock {
    width: 922px;
    display: flex;
    align-items: center;
  }
  .search {
    width: 275px;
    height: 40px;
    margin: 0 5px 0 17px;
    padding: 0 10px 0 13px;
    display: flex;
    align-items: center;
    border: 1px solid #525252;
    border-radius: 20px;
    background: #3b3b3b;
    color: #e6e6e6;
  }
  .search span {
    flex: 1;
    margin-left: 12px;
    font-size: 17px;
    letter-spacing: -0.350px;
    color: #ccc;
  }
  .app {
    position: relative;
    width: 50px;
    height: 50px;
    margin-right: 5px;
    display: flex;
    flex: none;
    align-items: center;
    justify-content: center;
  }
  .app.open {
    border: 1px solid #353535;
    border-radius: 5px;
    background: #2a2a2a;
  }
  .run {
    position: absolute;
    bottom: 1px;
    left: 21px;
    width: 8px;
    height: 4px;
    border-radius: 2px;
    background: #9a9a9a;
  }
  .run.wide {
    left: 5px;
    width: 40px;
    background: #ff99a4;
  }
  .run.violet {
    left: 14px;
    bottom: 0;
    width: 20px;
    background: #d79be6;
  }
  .who {
    position: absolute;
    top: 3px;
    right: 3px;
  }
  .tray {
    flex: 1;
    display: flex;
    align-items: center;
    padding-right: 24px;
  }
  .tray > :global(svg) {
    flex: none;
    margin-right: 20px;
  }
  .tray > :global(svg:first-child) {
    margin-right: 22px;
  }
  .tray > :global(svg:nth-child(6)) {
    margin-right: 10px;
  }
  .tray > :global(svg.snd) {
    margin-right: 10px;
  }
  .lang {
    width: 36px;
    margin: -3px 19px 0 0;
    display: flex;
    flex-direction: column;
    align-items: center;
    line-height: 20px;
    letter-spacing: -0.450px;
  }
  .clock {
    flex: 1;
    margin-top: -3px;
    display: flex;
    flex-direction: column;
    align-items: flex-end;
    line-height: 20px;
    letter-spacing: -0.200px;
  }
</style>
